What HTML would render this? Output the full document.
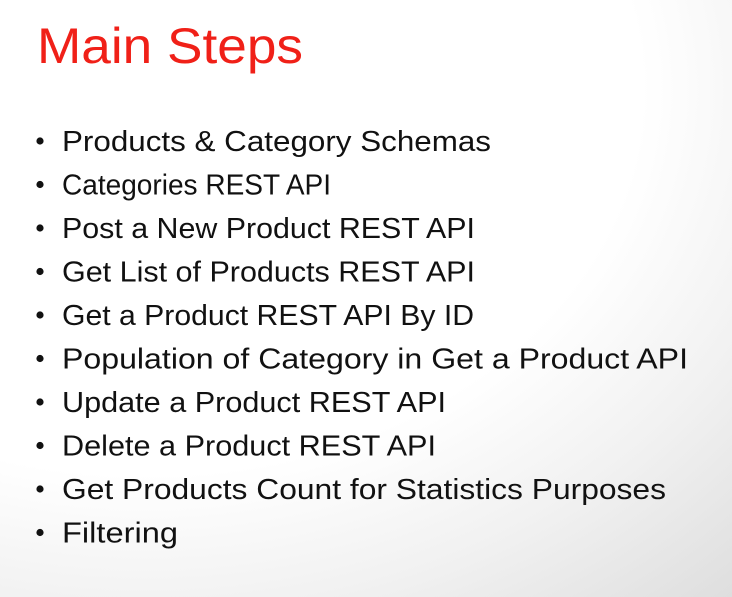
<!DOCTYPE html>
<html><head><style>
html,body{margin:0;padding:0;width:732px;height:597px;overflow:hidden}
body{background:radial-gradient(ellipse 900px 700px at 20% 15%, #ffffff 55%, #f1f1f1 75%, #dcdcdc 100%);}
svg{position:absolute;left:0;top:0}
text{font-family:"Liberation Sans",sans-serif}
</style></head><body>
<svg width="732" height="597" xmlns="http://www.w3.org/2000/svg">
<text x="37" y="63" font-size="50" fill="#f02018" textLength="266" lengthAdjust="spacingAndGlyphs">Main Steps</text>
<g fill="#111" font-size="29">
<g>
<circle cx="40" cy="141" r="3.6"/><circle cx="40" cy="184.5" r="3.6"/><circle cx="40" cy="228" r="3.6"/><circle cx="40" cy="271.5" r="3.6"/><circle cx="40" cy="315" r="3.6"/><circle cx="40" cy="358.5" r="3.6"/><circle cx="40" cy="402" r="3.6"/><circle cx="40" cy="445.5" r="3.6"/><circle cx="40" cy="489" r="3.6"/><circle cx="40" cy="532.5" r="3.6"/>
</g>
<text x="62" y="151" textLength="429" lengthAdjust="spacingAndGlyphs">Products &amp; Category Schemas</text>
<text x="62" y="194.5" textLength="269" lengthAdjust="spacingAndGlyphs">Categories REST API</text>
<text x="62" y="238" textLength="413" lengthAdjust="spacingAndGlyphs">Post a New Product REST API</text>
<text x="62" y="281.5" textLength="413" lengthAdjust="spacingAndGlyphs">Get List of Products REST API</text>
<text x="62" y="325" textLength="412" lengthAdjust="spacingAndGlyphs">Get a Product REST API By ID</text>
<text x="62" y="368.5" textLength="626" lengthAdjust="spacingAndGlyphs">Population of Category in Get a Product API</text>
<text x="62" y="412" textLength="384" lengthAdjust="spacingAndGlyphs">Update a Product REST API</text>
<text x="62" y="455.5" textLength="374" lengthAdjust="spacingAndGlyphs">Delete a Product REST API</text>
<text x="62" y="499" textLength="604" lengthAdjust="spacingAndGlyphs">Get Products Count for Statistics Purposes</text>
<text x="62" y="542.5" textLength="116" lengthAdjust="spacingAndGlyphs">Filtering</text>
</g>
</svg>
</body></html>
